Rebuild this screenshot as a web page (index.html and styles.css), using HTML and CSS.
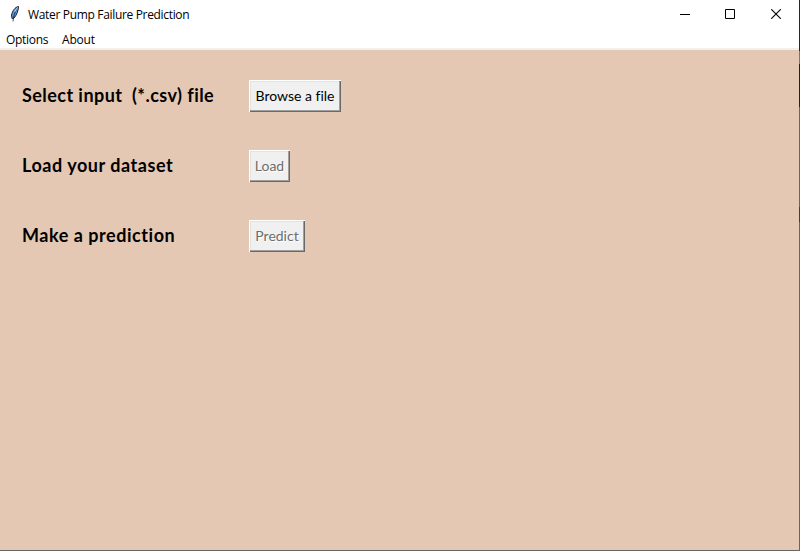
FILE: index.html
```html
<!DOCTYPE html>
<html lang="en">
<head>
<meta charset="utf-8">
<title>Water Pump Failure Prediction</title>
<link rel="stylesheet" href="styles.css">
</head>
<body>
<div class="window">
  <header class="titlebar">
    <svg class="feather" width="12" height="18" viewBox="0 0 12 18">
      <path d="M9.500 1.500C6 2 3.500 6 2.500 10L3 13.500 5 13C7.500 10.500 9.500 5.500 9.500 1.500Z" fill="#5c94dc" stroke="#1d2430" stroke-width="1"/>
      <path d="M8 3.500C6 7 4.500 11 4 16.500" fill="none" stroke="#111" stroke-width=".7"/>
      <path d="M8.500 2.500L5.500 7" stroke="#c9d6e5" stroke-width="1"/>
    </svg>
    <h1 class="title">Water Pump Failure Prediction</h1>
    <div class="controls">
      <svg class="minimize" width="10" height="10" viewBox="0 0 10 10"><path d="M0 5.500H10" stroke="#000"/></svg>
      <svg width="10" height="10" viewBox="0 0 10 10"><path d="M.5 .5H9.500V9.500H.5Z" fill="none" stroke="#000"/></svg>
      <svg width="10" height="10" viewBox="0 0 10 10"><path d="M.2 .2L9.800 9.800M9.800 .2L.2 9.800" stroke="#000" stroke-width="1.100"/></svg>
    </div>
  </header>
  <nav class="menubar">
    <span class="menu menu-options">Options</span>
    <span class="menu">About</span>
  </nav>
  <main class="form">
    <div class="row"><span class="label label-select">Select input&nbsp; (*.csv) file</span><button class="button browse">Browse a file</button></div>
    <div class="row"><span class="label">Load your dataset</span><button class="button load" disabled>Load</button></div>
    <div class="row"><span class="label">Make a prediction</span><button class="button predict" disabled>Predict</button></div>
  </main>
</div>
</body>
</html>
```
FILE: styles.css
```css
* { box-sizing: border-box; }
body { margin: 0; overflow: hidden; background: #fff; }
.window {
  width: 800px;
  height: 551px;
  display: flex;
  flex-direction: column;
  border-right: 1px solid #555;
  border-bottom: 1px solid #606060;
  border-image: linear-gradient(#20292b 0 52px, #777 52px 65px, #222 65px 108px, #666 108px 208px, #35424b 208px 223px, #666 223px) 1;
  border-image-width: 0 1px 1px 0;
}
.titlebar {
  flex: 0 0 30px;
  display: flex;
  align-items: center;
  padding: 0 18px 1px 9px;
  font-family: "Open Sans", "Noto Sans", sans-serif;
}
.feather { margin-top: -1px; }
.title {
  margin: 0 0 0 7px;
  font-size: 12px;
  line-height: 20px;
  font-weight: 400;
  white-space: nowrap;
  letter-spacing: -0.33px;
}
.controls { margin: -1px 0 0 auto; display: flex; gap: 36px; }
.controls svg { display: block; }
.controls .minimize { margin-right: -1px; }
.menubar {
  flex: 0 0 20px;
  min-height: 0;
  display: flex;
  padding: 1px 0 0 6px;
  border-bottom: 2px solid #f0f0f0;
  font: 12px/18px "Open Sans", "Noto Sans", sans-serif;
}
.menu { white-space: nowrap; letter-spacing: -0.2px; }
.menu-options { width: 56px; letter-spacing: -0.3px; }
.form {
  flex: 1;
  display: flex;
  flex-direction: column;
  gap: 38px;
  padding: 30px 0 0 22px;
  background: #e4c8b4;
  font-family: Lato, sans-serif;
  font-variant-ligatures: none;
}
.row { display: flex; align-items: center; height: 32px; }
.label {
  width: 227px;
  padding-bottom: 2px;
  font-size: 18px;
  line-height: 22px;
  font-weight: 700;
  letter-spacing: 0.54px;
  white-space: nowrap;
}
.label-select { letter-spacing: 0.44px; }
.button {
  height: 32px;
  padding: 0;
  border: 0;
  background: #f0f0f0;
  box-shadow: inset 1px 1px #fff, inset -1px -1px #696969, inset -2px -2px #a0a0a0, inset 2px 2px #e3e3e3;
  color: #000;
  font: 14px/20px Lato, sans-serif;
  font-variant-ligatures: none;
  white-space: nowrap;
}
.button:disabled { color: #6d6d6d; text-shadow: 1px 1px #fff; }
.browse { width: 92px; }
.load { width: 41px; }
.predict { width: 56px; }
```
